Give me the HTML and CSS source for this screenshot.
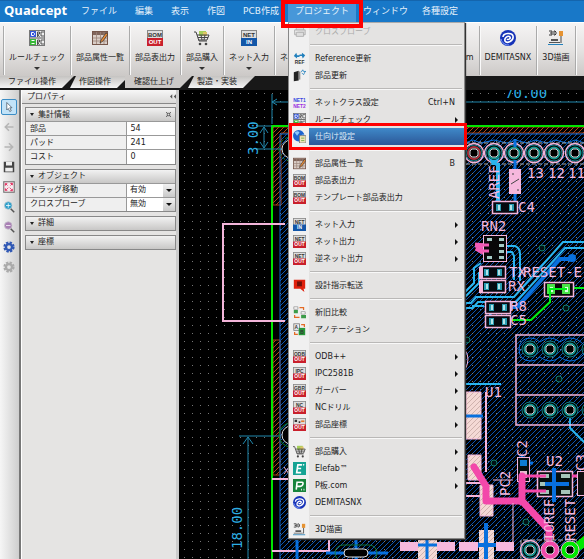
FILE: index.html
```html
<!DOCTYPE html>
<html lang="ja">
<head>
    <meta charset="UTF-8">
    <meta name="viewport" content="width=device-width, initial-scale=1.0">
    <title>Quadcept</title>
    <link rel="stylesheet" href="styles.css">
</head>
<body>
    <!-- 共通アイコン -->
    <svg class="defs" width="0" height="0" aria-hidden="true">
        <symbol id="out" viewBox="0 0 16 16">
            <rect x=".5" y=".5" width="15" height="15" fill="#ddd" stroke="#888"/>
            <rect y="8" width="16" height="8" fill="#c9202c"/>
        </symbol>
        <symbol id="in" viewBox="0 0 16 16">
            <rect x=".5" y=".5" width="15" height="15" fill="#ddd" stroke="#888"/>
            <rect y="8" width="16" height="8" fill="#1256a8"/>
        </symbol>
        <symbol id="list" viewBox="0 0 16 16">
            <rect x=".5" y="1.500" width="15" height="13" fill="#d9cdc6" stroke="#75564a"/>
            <path d="M1 2h14v3H1z" fill="#80655b"/>
            <path d="M4.500 2v12M8.500 2v12M12 2v12M1 8h14M1 11h14" stroke="#9b8378" stroke-width=".8"/>
            <path d="M8 13l1-3 5-7 2 1-5 7z" fill="#e98b36" stroke="#333" stroke-width=".7"/>
        </symbol>
        <symbol id="cart" viewBox="0 0 16 16">
            <path d="M5 1h7v5H5z" fill="#a5cf58"/><path d="M9 2h4v4H9z" fill="#dfc568"/>
            <path d="M0 2h2l3 9h8M3 5h12l-2 5H5M4 7.500h10M7 5l1 5M11 5l-1 5" fill="none" stroke="#444"/>
            <circle cx="6" cy="14" r="1.300" fill="#444"/><circle cx="12" cy="14" r="1.300" fill="#444"/>
        </symbol>
        <symbol id="rule" viewBox="0 0 16 16">
            <rect x=".5" y=".5" width="15" height="15" fill="#eee" stroke="#777"/>
            <path d="M1 1h6v6H1z" fill="#3558d8"/><path d="M1 9h6v6H1z" fill="#38b838"/>
            <path d="M2.500 2.500h2l1 1v1l-1 1h-2zM2.500 10.500h3M2.500 13.500h3" fill="none" stroke="#fff"/>
            <path d="M8.500 7V2h2v2h-2l2 3M15 2h-3v4h3M8.500 15v-5h2v2h-2l2 3M15 10h-3v4h3M1 8h14" fill="none" stroke="#444" stroke-width=".9"/>
        </symbol>
        <symbol id="demitas" viewBox="0 0 16 16">
            <circle cx="8" cy="8" r="8" fill="#1733b8"/>
            <path d="M3 7c0-4 9-5 10-1 1 5-6 8-8 5-1-3 3-6 5-4 1 2-2 3-3 2" fill="none" stroke="#fff" stroke-width="1.600"/>
            <path d="M1 9c1 4 4 6 8 6" fill="none" stroke="#82a1ff"/>
        </symbol>
        <symbol id="view3d" viewBox="0 0 16 16">
            <path d="M1 1h3v4H1M2 3h2M6 1v4h1l1-1V2L7 1z" fill="none" stroke="#333"/>
            <path d="M11 1h4v5h-4z" fill="#e69332"/><path d="M13 6v7" stroke="#444"/>
            <path d="M3 9h7v2H3zM1 12h11v1H1z" fill="#555"/><path d="M0 14h15v1H0z" fill="#2480bb"/>
        </symbol>
        <symbol id="pban" viewBox="0 0 16 16">
            <rect width="16" height="16" fill="#17843c"/>
            <path d="M4 13l1-9h6q2 0 1 3-1 2-3 2H5M10 13h1M13 13h1" fill="none" stroke="#fff" stroke-width="2"/>
        </symbol>
        <symbol id="elefab" viewBox="0 0 16 16">
            <rect width="16" height="16" fill="#16a394"/>
            <path d="M11 3.500H6L4.500 13H10M5 8h5" fill="none" stroke="#fff" stroke-width="2"/><circle cx="13" cy="3.500" r="1" fill="#fff"/>
        </symbol>
        <symbol id="gear" viewBox="0 0 16 16">
            <circle cx="8" cy="8" r="6" fill="none" stroke="currentColor" stroke-width="3" stroke-dasharray="3.140 1.572"/>
            <circle cx="8" cy="8" r="4" fill="none" stroke="currentColor" stroke-width="3"/>
        </symbol>
    </svg>

    <header class="menubar">
        <h1 class="logo">Quadcept</h1>
        <nav class="nav nav-main">
            <button>ファイル</button>
            <button>編集</button>
            <button>表示</button>
            <button>作図</button>
            <button>PCB作成</button>
        </nav>
        <nav class="nav nav-tools">
            <div class="nav-item open">
                <button aria-expanded="true">プロジェクト</button>
                <div class="dropdown">
                    <button class="item" disabled><svg viewBox="0 0 16 16"><path d="M4 6V2h9v4M2 6h13v6h-2M4 12H2V6M4 9h9v5H4z" fill="#ddd" stroke="#aaa"/></svg><span>クロスプローブ</span></button>
                    <hr>
                    <button class="item"><svg viewBox="0 0 16 16"><path d="M1 5l3-4 1 3h3v2H5v2zM15 4l-3 4-1-3H8V3h3V1z" fill="#2180bd"/><text x="8" y="15" class="tag">REF</text></svg><span>Reference更新</span></button>
                    <button class="item"><svg viewBox="0 0 16 16"><path d="M1 4l6-2v12l-6 1z" fill="#222"/><path d="M7 3h2v10H7z" fill="#888"/><path d="M10 4l2-3 1 2h3M15 3l-2 4-2-2" fill="none" stroke="#2180bd"/></svg><span>部品更新</span></button>
                    <hr>
                    <button class="item"><svg viewBox="0 0 16 16"><text x="8" y="7" class="tag tag-blue">NET1</text><text x="8" y="15" class="tag tag-purple">NET2</text></svg><span>ネットクラス設定</span><kbd>Ctrl+N</kbd></button>
                    <button class="item more"><svg><use href="#rule"/></svg><span>ルールチェック</span></button>
                    <button class="item selected"><svg viewBox="0 0 16 16"><circle cx="7" cy="7" r="7" fill="#1e64cf"/><path d="M2 3q4-3 6 0L5 7zM9 7l4-2v5z" fill="#8bc9ff"/><rect x="8" y="7" width="8" height="9" fill="#eee3b8" stroke="#777"/><path d="M10 10h4M10 13h4" stroke="#69a53d"/></svg><span>仕向け設定</span></button>
                    <hr>
                    <button class="item"><svg><use href="#list"/></svg><span>部品属性一覧</span><kbd>B</kbd></button>
                    <button class="item"><svg viewBox="0 0 16 16"><use href="#out"/><text x="8" y="7" class="tag">BOM</text><text x="8" y="14" class="tag tag-light">OUT</text></svg><span>部品表出力</span></button>
                    <button class="item"><svg viewBox="0 0 16 16"><use href="#out"/><text x="8" y="7" class="tag">BOM</text><text x="8" y="14" class="tag tag-light">OUT</text></svg><span>テンプレート部品表出力</span></button>
                    <hr>
                    <button class="item more"><svg viewBox="0 0 16 16"><use href="#in"/><text x="8" y="7" class="tag">NET</text><text x="8" y="14" class="tag tag-light">IN</text></svg><span>ネット入力</span></button>
                    <button class="item more"><svg viewBox="0 0 16 16"><use href="#out"/><text x="8" y="7" class="tag">NET</text><text x="8" y="14" class="tag tag-light">OUT</text></svg><span>ネット出力</span></button>
                    <button class="item more"><svg viewBox="0 0 16 16"><use href="#out"/><text x="8" y="7" class="tag">NET</text><text x="8" y="14" class="tag tag-light">OUT</text></svg><span>逆ネット出力</span></button>
                    <hr>
                    <button class="item"><svg viewBox="0 0 16 16"><path d="M1 1h14v11h-2l1 4-5-4H1z" fill="#e0210d"/><path d="M5 3h6v6H5z" fill="#701009"/></svg><span>設計指示転送</span></button>
                    <hr>
                    <button class="item"><svg viewBox="0 0 16 16"><path d="M1 1h5v3H1zM10 7h5v3h-5z" fill="#fff" stroke="#999"/><path d="M1 5h5v4H1zM10 11h6v4h-6z" fill="#3d9c4a"/><path d="M8 2h5v3M2 11v3h6" fill="none" stroke="#e46b25" stroke-width="1.500"/></svg><span>新旧比較</span></button>
                    <button class="item"><svg viewBox="0 0 16 16"><rect x="1" y="1" width="7" height="8" fill="#eee" stroke="#777"/><rect x="7" y="6" width="8" height="9" fill="#27983a"/><text x="4" y="7" class="tag">A</text><text x="11" y="13" class="tag">B</text><path d="M10 2h4v3M2 11v3h4" fill="none" stroke="#e46b25" stroke-width="1.500"/></svg><span>アノテーション</span></button>
                    <hr>
                    <button class="item more"><svg viewBox="0 0 16 16"><use href="#out"/><text x="8" y="7" class="tag">ODB</text><text x="8" y="14" class="tag tag-light">OUT</text></svg><span>ODB++</span></button>
                    <button class="item more"><svg viewBox="0 0 16 16"><use href="#out"/><text x="8" y="7" class="tag">IPC</text><text x="8" y="14" class="tag tag-light">OUT</text></svg><span>IPC2581B</span></button>
                    <button class="item more"><svg viewBox="0 0 16 16"><use href="#out"/><text x="8" y="7" class="tag">GBR</text><text x="8" y="14" class="tag tag-light">OUT</text></svg><span>ガーバー</span></button>
                    <button class="item more"><svg viewBox="0 0 16 16"><use href="#out"/><text x="8" y="7" class="tag">NC</text><text x="8" y="14" class="tag tag-light">OUT</text></svg><span>NCドリル</span></button>
                    <button class="item more"><svg viewBox="0 0 16 16"><use href="#out"/><path d="M2 2h3v3H2zM7 4h2v2H7z" fill="#333"/><path d="M10 3h4v2h-4z" fill="#e47a2d"/><text x="8" y="14" class="tag tag-light">OUT</text></svg><span>部品座標</span></button>
                    <hr>
                    <button class="item more"><svg><use href="#cart"/></svg><span>部品購入</span></button>
                    <button class="item more"><svg><use href="#elefab"/></svg><span>Elefab™</span></button>
                    <button class="item more"><svg><use href="#pban"/></svg><span>P板.com</span></button>
                    <button class="item"><svg><use href="#demitas"/></svg><span>DEMITASNX</span></button>
                    <hr>
                    <button class="item"><svg><use href="#view3d"/></svg><span>3D描画</span></button>
                </div>
            </div>
            <button>ウィンドウ</button>
            <button>各種設定</button>
        </nav>
    </header>

    <div class="ribbon">
        <button class="tool drop"><svg><use href="#rule"/></svg><span>ルールチェック</span></button>
        <button class="tool"><svg><use href="#list"/></svg><span>部品属性一覧</span></button>
        <button class="tool"><svg viewBox="0 0 16 16"><use href="#out"/><text x="8" y="7" class="tag">BOM</text><text x="8" y="14" class="tag tag-light">OUT</text></svg><span>部品表出力</span></button>
        <button class="tool drop"><svg><use href="#cart"/></svg><span>部品購入</span></button>
        <button class="tool drop"><svg viewBox="0 0 16 16"><use href="#in"/><text x="8" y="7" class="tag">NET</text><text x="8" y="14" class="tag tag-light">IN</text></svg><span>ネット入力</span></button>
        <button class="tool drop"><svg><use href="#out"/></svg><span>ネット出力</span></button>
        <button class="tool"><svg><use href="#out"/></svg><span>アノテーション</span></button>
        <button class="tool"><svg><use href="#elefab"/></svg><span>Elefab™</span></button>
        <button class="tool"><svg><use href="#pban"/></svg><span>P板.com</span></button>
        <button class="tool"><svg><use href="#demitas"/></svg><span>DEMITASNX</span></button>
        <button class="tool"><svg><use href="#view3d"/></svg><span>3D描画</span></button>
        <button class="tool"><svg></svg><span>も</span></button>
    </div>
    <div class="tabs">
        <button class="tab">ファイル操作</button>
        <button class="tab">作図操作</button>
        <button class="tab active">確認仕上げ</button>
        <button class="tab">製造・実装</button>
    </div>

    <main class="workspace">
        <div class="sidebar">
            <button class="active" aria-label="選択"><svg viewBox="0 0 16 16"><path d="M5 2v10l2-2 2 4 2-1-2-4h3z" fill="#fff" stroke="#456"/></svg></button>
            <button aria-label="戻る"><svg viewBox="0 0 16 16"><path d="M14 8H3M8 3L3 8l5 5" fill="none" stroke="#b5b5b5" stroke-width="2"/></svg></button>
            <button aria-label="進む"><svg viewBox="0 0 16 16"><path d="M2 8h11M8 3l5 5-5 5" fill="none" stroke="#b5b5b5" stroke-width="2"/></svg></button>
            <button aria-label="保存"><svg viewBox="0 0 16 16"><path d="M1 1h14v14H1z" fill="#444"/><path d="M4 1h8v5H4zM3 9h10v5H3z" fill="#eee"/></svg></button>
            <button aria-label="全体表示"><svg viewBox="0 0 16 16"><rect x="1" y="1" width="14" height="14" fill="#f7e9ed" stroke="#777" stroke-width="1.500"/><path d="M3 6V3h3zM10 3h3v3zM3 10v3h3zM10 13h3v-3zM4 4l8 8M12 4l-8 8" fill="#e12658" stroke="#e12658" stroke-dasharray="3 4"/></svg></button>
            <button aria-label="拡大"><svg viewBox="0 0 16 16"><path d="M10 10l5 5" stroke="#555" stroke-width="2"/><circle cx="7" cy="6" r="5" fill="#2a9ecb" stroke="#b7c5cd"/><path d="M4 6h6M7 3v6" stroke="#fff"/></svg></button>
            <button aria-label="縮小"><svg viewBox="0 0 16 16"><path d="M10 10l5 5" stroke="#555" stroke-width="2"/><circle cx="7" cy="6" r="5" fill="#a980b5" stroke="#c5bfc9"/><path d="M4 6h6" stroke="#fff"/></svg></button>
            <button class="blue" aria-label="設定"><svg><use href="#gear"/></svg></button>
            <button class="gray" aria-label="詳細設定"><svg><use href="#gear"/></svg></button>
        </div>

        <aside class="panel">
            <h2 class="panel-title">プロパティ<svg viewBox="0 0 8 6"><path d="M3 0v6L0 3zM8 0v6L5 3z" fill="#555"/></svg></h2>
            <section class="group">
                <h3>集計情報<svg viewBox="0 0 6 6"><path d="M0 0l2 2M6 0L4 2M0 6l2-2M6 6L4 4M1.500 1.500h3v3h-3z" fill="none" stroke="#555"/></svg></h3>
                <table>
                    <tr><th>部品</th><td>54</td></tr>
                    <tr><th>パッド</th><td>241</td></tr>
                    <tr><th>コスト</th><td>0</td></tr>
                </table>
            </section>
            <section class="group">
                <h3>オブジェクト</h3>
                <div class="field">
                    <label for="drag">ドラッグ移動</label>
                    <div class="select"><select id="drag"><option>有効</option><option>無効</option></select></div>
                </div>
                <div class="field">
                    <label for="probe">クロスプローブ</label>
                    <div class="select"><select id="probe"><option>無効</option><option>有効</option></select></div>
                </div>
            </section>
            <section class="group"><h3>詳細</h3></section>
            <section class="group"><h3>座標</h3></section>
        </aside>

        <!-- 基板エディタ -->
        <svg class="board" viewBox="178 90 406 469" preserveAspectRatio="xMinYMin slice">
            <defs>
                <pattern id="dots" x="183" y="93" width="8" height="8" patternUnits="userSpaceOnUse"><rect width="1" height="1" fill="#777"/></pattern>
                <pattern id="blueHatch" width="5" height="5" patternUnits="userSpaceOnUse"><path d="M-1 6L6-1M-1 1l2-2M4 6l2-2" stroke="#0b55b4"/></pattern>
                <pattern id="orangeHatch" width="5" height="5" patternUnits="userSpaceOnUse"><path d="M-1 6L6-1M-1 1l2-2M4 6l2-2" stroke="#b44a18"/></pattern>
                <pattern id="copper" width="5" height="5" patternUnits="userSpaceOnUse"><rect width="5" height="5" fill="#f4d9d5"/><path d="M-1 6L6-1" stroke="#bfa19c" stroke-width=".7"/></pattern>
                <g id="hole">
                    <circle r="8" fill="#000" stroke="#128087"/>
                    <circle r="5.500" fill="none" stroke="#11968e" stroke-width="2"/>
                    <path d="M-4-2l2-2h4l2 2v4l-2 2h-4l-2-2z" fill="#000" stroke="#d6d2d7"/>
                </g>
                <g id="ringhole"><use href="#hole"/><circle r="9.500" fill="none" stroke="#f4b5da" stroke-width="1.500"/></g>
                <g id="chip">
                    <rect x=".5" y=".5" width="25" height="12" fill="#050a10" stroke="#f4b5da" stroke-width="1.500"/>
                    <path d="M4 3h5v7H4zM17 3h5v7h-5z" fill="#299bb0"/><path d="M6 4h2v5H6zM18 4h2v5h-2z" fill="#b4e2e7"/>
                </g>
            </defs>
            <rect x="178" y="90" width="406" height="469" fill="#000"/>
            <rect x="279" y="133" width="305" height="426" fill="url(#blueHatch)"/>
            <path d="M272 127h312v6H280v72h-8zM272 340h7v135h-7z" fill="url(#orangeHatch)" stroke="#a44216"/>
            <rect x="178" y="90" width="406" height="469" fill="url(#dots)"/>
            <path d="M279 559V134h305" fill="none" stroke="#0b62cc"/>
            <path d="M271 559V126h313" fill="none" stroke="#00e600" stroke-width="2"/>

            <!-- 寸法線 -->
            <g fill="none" stroke="#2188ad">
                <path d="M271 94v30M271 102h313M276 99l-5 3 5 3M256 126h15M256 149h28M263 127v21M259 133l4-6 4 6M259 142l4 6 4-6M238 436h42M247 559V437M242 444l5-7 5 7"/>
            </g>
            <g class="dimension">
                <text x="504" y="98">70.00</text>
                <text transform="translate(257 155) rotate(-90)">3.00</text>
                <text transform="translate(241 549) rotate(-90)">18.00</text>
            </g>
            <path d="M284 224h-62v97h62M271 479h17M271 551h57V538" fill="none" stroke="#f4b5da" stroke-width="2"/>
            <circle cx="290" cy="149" r="9" fill="#000" stroke="#ddd"/><circle cx="290" cy="149" r="12" fill="none" stroke="#087c29" stroke-dasharray="3 2"/>
            <circle cx="290" cy="435" r="9" fill="#000" stroke="#ddd"/><circle cx="290" cy="435" r="12" fill="none" stroke="#087c29"/>
            <path d="M283 467l5 7M288 467l-5 7" stroke="#f4b5da"/>
            <path d="M296 559v-20M325 553h62M355 538v21" stroke="#0870de" stroke-width="3"/>
            <rect x="334" y="545" width="42" height="16" rx="8" fill="none" stroke="#12733d"/><rect x="343" y="549" width="24" height="8" rx="4" fill="#000" stroke="#ddd"/>
            <path d="M399 542h18v9h-18zM436 542h18v9h-18zM458 542h19v9h-19zM495 542h18v9h-18z" fill="#f6b8dd"/>
            <path d="M417 538h19v21h-19z" fill="url(#copper)"/><path d="M426 538v21M417 545h19" stroke="#0870de" stroke-width="3"/>

            <!-- ピンヘッダ -->
            <path d="M464 143l8-3 8 3 13-3 13 3 8-3 12 3 8-3 12 3 8-3 12 3 8-3 10 3" fill="none" stroke="#0870de"/>
            <path d="M465 143h119M465 164h119" stroke="#aaa" stroke-dasharray="4 2"/>
            <use href="#ringhole" x="473" y="153"/><use href="#ringhole" x="493" y="153"/><use href="#ringhole" x="513" y="153"/>
            <use href="#ringhole" x="533" y="153"/><use href="#ringhole" x="553" y="153"/><use href="#ringhole" x="574" y="153"/>
            <circle cx="473" cy="153" r="6" fill="none" stroke="#a92d38" stroke-width="2"/>
            <path d="M514 139v8M514 160v48" stroke="#0870de" stroke-width="3"/>
            <path d="M487 156q6 8 12 0l-4 9h-4z" fill="#2ab4ef"/><path d="M497 163v42" stroke="#2ab4ef" stroke-width="4"/>
            <rect x="508" y="169" width="12" height="25" fill="#f6b8dd"/><path d="M510 184l8-5M511 174h2M516 190h2" stroke="#444"/>
            <use href="#chip" x="491" y="201"/>

            <!-- 配線 -->
            <g fill="none" stroke="#2ab4ef" stroke-width="2">
                <path d="M464 292l9-9V268l7-5M464 297l14-14v-11M464 303h6l5-6h38l49-55h22M464 308h8l5-6h38l49-54h20M506 246h8q5 2 5 8v27M506 252h5l2 4v24"/>
                <path d="M464 384h36M471 306h12M489 308v12M569 410v18l17 17"/>
            </g>
            <path d="M508 307h8l43-48h12" fill="none" stroke="#0870de" stroke-width="4"/><circle cx="571" cy="258" r="4" fill="#0870de"/>
            <path d="M504 320h26l19-18v-13M566 288h18" fill="none" stroke="#00ee18" stroke-width="2"/>
            <path d="M474 245l9 1h6M475 248l9 5h5" stroke="#f15bb5" stroke-width="5"/>
            <rect x="482.500" y="235.500" width="23" height="26" fill="#080808" stroke="#f4b5da"/>
            <path d="M486 238h5v3h-5zM486 256h5v3h-5zM498 238h5v3h-5zM498 244h5v3h-5zM498 250h5v3h-5zM498 256h5v3h-5z" fill="#a6cbc7"/>
            <path d="M474 245h14M478 251h10" stroke="#f15bb5" stroke-width="3"/>
            <use href="#chip" x="479" y="266"/><use href="#chip" x="479" y="280"/><use href="#chip" x="484" y="301"/><use href="#chip" x="484" y="315"/>
            <path d="M478 267h4v12h-4zM478 281h4v12h-4z" fill="#f4b5da"/>
            <rect x="543.500" y="282.500" width="29" height="14" fill="#080808" stroke="#f4b5da" stroke-width="1.500"/>
            <path d="M546 284h8v10h-8zM561 284h8v10h-8z" fill="#49e448"/><path d="M549 287h3v5h-3zM564 287h3v5h-3z" fill="#d9ffe0"/>
            <path d="M549 297v-8h17" fill="none" stroke="#00ee18" stroke-width="2"/>

            <!-- コネクタ -->
            <path d="M584 335h-69v90h69M515 365h69M515 395h69" fill="none" stroke="#f4b5da" stroke-width="1.500"/>
            <path d="M518 350q0-12 12-12 5 0 9 4 5-4 10-4t10 4q5-4 10-4 8 0 15 8M518 349q0 12 12 12 5 0 9-4 5 4 10 4t10-4q5 4 10 4 8 0 15-8" fill="none" stroke="#0870de"/>
            <use href="#hole" x="529" y="349"/><use href="#hole" x="549" y="349"/><use href="#hole" x="569" y="349"/><use href="#hole" x="589" y="349"/>
            <use href="#hole" x="529" y="410"/><use href="#hole" x="549" y="410"/><use href="#hole" x="569" y="410"/><use href="#hole" x="589" y="410"/>
            <g fill="#001114" stroke="#138170"><circle cx="541" cy="248" r="3"/><circle cx="565" cy="308" r="3"/><circle cx="558" cy="379" r="3"/><circle cx="493" cy="463" r="3"/><circle cx="525" cy="522" r="3"/><circle cx="466" cy="340" r="3"/></g>

            <!-- 電源まわり -->
            <path d="M465 392h15v47h-15zM467 455h13v25h-13zM479 485h13v31h-13z" fill="url(#copper)" stroke="#f4b5da"/>
            <path d="M485 392v80M460 483h25M460 496h20" stroke="#f4b5da" stroke-width="2"/>
            <path d="M465 416h17M516 463h16M521 455v10" stroke="#0870de" stroke-width="3"/>
            <rect x="516.500" y="457.500" width="12" height="24" fill="#07100e" stroke="#f4b5da"/><path d="M519 460h7v6h-7z" fill="#0e7dd1"/><path d="M519 471h7v7h-7z" fill="#e7bed1"/>
            <rect x="536.500" y="471.500" width="35" height="25" fill="#07100e" stroke="#f4b5da" stroke-width="1.500"/>
            <path d="M539 474h9v4h-9zM539 482h9v4h-9zM539 490h9v4h-9zM560 474h9v4h-9zM560 490h9v4h-9z" fill="#a6c5b9"/>
            <path d="M553 468v34M544 484h24" stroke="#0870de" stroke-width="4"/>
            <path d="M473 467l12 19v15h36l27 29v29M521 476v26" fill="none" stroke="#f348aa" stroke-width="7" stroke-linejoin="round" stroke-linecap="round"/>
            <path d="M521 476h24M521 491h24M571 476h13" stroke="#f348aa" stroke-width="3"/>
            <rect x="576.500" y="471.500" width="10" height="24" fill="#111" stroke="#f4b5da"/>
            <path d="M492 480h20M512 503v39" stroke="#f4b5da"/>
            <path d="M478 530h15v29h-15z" fill="url(#copper)"/><path d="M485 523v36M477 545h18" stroke="#0870de" stroke-width="4"/>
            <path d="M520 559v-19h64" fill="none" stroke="#bbb" stroke-dasharray="5 2"/>
            <circle cx="569" cy="550" r="9" fill="#00e900"/><path d="M572 545l12-10v12l-8 5z" fill="#00e900"/><circle cx="549" cy="550" r="9" fill="#f348aa"/>
            <use href="#ringhole" x="529" y="550"/>
            <path d="M545 548l2-2h4l2 2v4l-2 2h-4l-2-2zM565 548l2-2h4l2 2v4l-2 2h-4l-2-2z" fill="#000" stroke="#ddd"/>
            <g fill="none" stroke="#f4b5da"><circle cx="549" cy="550" r="9"/><circle cx="569" cy="550" r="9"/><path d="M464 350q6 8 0 20"/></g>

            <g class="silk">
                <text x="526" y="178">13</text><text x="547" y="178">12</text><text x="567" y="178">11</text>
                <text x="517" y="212">C4</text><text x="480" y="231">RN2</text><text x="508" y="277">TX</text><text x="522" y="277">RESET-E</text>
                <text x="507" y="291">RX</text><text x="509" y="311">R8</text><text x="509" y="325">C5</text><text x="484" y="397">U1</text><text x="545" y="466">U2</text>
                <text transform="translate(498 199) rotate(-90)">AREF</text>
                <text transform="translate(526 457) rotate(-90)">C2</text>
                <text transform="translate(509 496) rotate(-90)">PC2</text>
                <text transform="translate(585 471) rotate(-90)">C3</text>
                <text transform="translate(553 541) rotate(-90)">IOREF</text>
                <text transform="translate(574 541) rotate(-90)">RESET</text>
            </g>
        </svg>
    </main>
</body>
</html>
```
FILE: styles.css
```css
* {
    box-sizing: border-box;
}

body {
    margin: 0;
    height: 100vh;
    display: flex;
    flex-direction: column;
    overflow: hidden;
    background: #181818;
    color: #222;
    font-family: "DejaVu Sans", "Noto Sans CJK JP", sans-serif;
    font-size: 8px;
    line-height: 12px;
}

button {
    margin: 0;
    padding: 0;
    border: none;
    background: none;
    color: inherit;
    font: inherit;
    white-space: nowrap;
}

h1, h2, h3 {
    margin: 0;
    font-size: 8px;
    font-weight: normal;
}

.defs {
    position: absolute;
}

/* アイコン内の文字 */
.tag {
    font: bold 6px "Liberation Sans", sans-serif;
    text-anchor: middle;
    fill: #333;
}

.tag-light { fill: #fff; }
.tag-blue { fill: #3546df; }
.tag-purple { fill: #9b2be0; }

/* メニューバー */
.menubar {
    flex: none;
    display: flex;
    height: 22px;
    background: #1878c8;
    border-top: 1px solid #1465ad;
    color: #e4f0fa;
    font-size: 9px;
}

.logo {
    width: 72px;
    padding-left: 4px;
    color: #fff;
    font: bold 13px/19px "Open Sans", sans-serif;
}

.nav {
    display: flex;
}

.nav-main button {
    padding: 0 9px;
}

.nav-tools > button,
.nav-item > button {
    height: 100%;
    padding: 0 7px;
}

.nav-main button,
.nav-tools > button,
.nav-item > button {
    padding-bottom: 2px;
}

.nav-item {
    position: relative;
}

.nav-item.open > button {
    background: #4797d9;
}

/* 強調枠 */
.nav-item.open::after {
    content: "";
    position: absolute;
    z-index: 12;
    inset: -1px -7px -6px;
    border: 4px solid #f00;
    pointer-events: none;
}

/* ドロップダウン */
.dropdown {
    position: absolute;
    z-index: 10;
    top: 100%;
    left: 0;
    width: 177px;
    background: linear-gradient(90deg, #f0f0f0 20px, #e4e3e2 20px);
    border: 1px solid #888;
    border-top-color: #aaa;
    box-shadow: 1px 1px 1px #333;
    color: #222;
    font-size: 8px;
}

.dropdown hr {
    height: 2px;
    margin: 4px 2px 4px 21px;
    border: none;
    border-top: 1px solid #b9b8b7;
    border-bottom: 1px solid #f8f8f8;
}

.item {
    position: relative;
    display: flex;
    align-items: center;
    width: 100%;
    height: 17px;
    padding: 0 9px 0 4px;
    text-align: left;
}

.item:disabled {
    color: #aaa;
}

.item svg {
    flex: none;
    width: 13px;
    height: 13px;
    margin-right: 9px;
}

.item kbd {
    margin-left: auto;
    font: inherit;
}

.item.more::after {
    content: "";
    margin-left: auto;
    margin-right: -3px;
    border: 3px solid transparent;
    border-left-color: #111;
    border-right: none;
}

.item.selected {
    background: linear-gradient(#3f89c9, #2c5797) no-repeat 20px 0;
    color: #dceaf7;
}

.item.selected::after {
    content: "";
    position: absolute;
    z-index: 1;
    inset: -5px -3px -5px 0;
    border: 3px solid #f00;
}

/* リボン */
.ribbon {
    flex: none;
    display: flex;
    height: 54px;
    padding: 3px 0 1px 3px;
    overflow: hidden;
    background: linear-gradient(#f5f4f4, #e5e3e2 50%, #ccc9c7);
    border-top: 1px solid #fff;
}

.tool {
    flex: none;
    position: relative;
    display: flex;
    flex-direction: column;
    align-items: center;
    gap: 6px;
    padding: 4px 5px;
    border-left: 1px solid #aaa;
    box-shadow: inset 1px 0 #fafafa;
}

.tool svg {
    width: 16px;
    height: 16px;
}

.drop::after {
    content: "";
    position: absolute;
    top: 41px;
    border: 3px solid transparent;
    border-top-color: #333;
    border-bottom: none;
}

.tabs {
    flex: none;
    display: flex;
    height: 14px;
    padding-bottom: 2px;
    background: #181818;
}

.tab {
    margin-right: -4px;
    padding: 0 18px 0 8px;
    background: linear-gradient(#c5c3c1, #f4f4f4);
    clip-path: polygon(0 0, 100% 0, calc(100% - 12px) 100%, 0 100%);
}

.tab + .tab {
    padding-left: 9px;
    clip-path: polygon(6px 0, 100% 0, calc(100% - 12px) 100%, 0 100%);
}

.tab + .tab.active {
    background: #ccc9c7;
    clip-path: polygon(0 0, 100% 0, calc(100% - 12px) 100%, 0 100%);
}

/* 作業エリア */
.workspace {
    flex: 1;
    min-height: 0;
    display: flex;
}

.sidebar {
    flex: none;
    width: 21px;
    display: flex;
    flex-direction: column;
    align-items: center;
    gap: 4px;
    padding: 9px 2px 0 1px;
    background: linear-gradient(90deg, #f6f6f6, #cecece);
    border-right: 2px solid #777;
}

.sidebar button {
    width: 16px;
    height: 16px;
    padding: 2px;
}

.sidebar svg {
    display: block;
    width: 12px;
    height: 12px;
}

.sidebar .active {
    background: #c2e3f8;
    border: 1px solid #3c8dc5;
    border-radius: 2px;
    padding: 1px;
}

.sidebar .blue { color: #3159b5; }
.sidebar .gray { color: #aaa; }

.panel {
    flex: none;
    width: 158px;
    background: #e5e4e3;
    border-right: 3px solid #ccc;
    border-left: 1px solid #fff;
}

.panel-title {
    display: flex;
    justify-content: space-between;
    align-items: center;
    height: 14px;
    margin-bottom: 3px;
    padding: 0 0 0 5px;
    background: linear-gradient(#f7f7f7, #dad9d8);
    border-bottom: 1px solid #888;
}

.panel-title svg {
    width: 6px;
    height: 5px;
}

.group {
    margin: 0 0 4px 3px;
    border: 1px solid #888;
}

.group h3 {
    display: flex;
    align-items: center;
    height: 13px;
    padding: 0 4px;
    background: linear-gradient(#f2f2f2, #c8c7c6);
}

.group h3::before {
    content: "";
    margin-right: 4px;
    border: 2px solid transparent;
    border-top: 3px solid #222;
    border-bottom: none;
}

.group h3 svg {
    width: 5px;
    height: 5px;
    margin-left: auto;
}

.group table {
    width: 100%;
    border-collapse: collapse;
}

.group tr {
    height: 14px;
}

.group th,
.group td {
    padding: 0 4px;
    border-top: 1px solid #999;
    font-weight: normal;
    text-align: left;
}

.group th,
.field label {
    width: 100px;
    background: #efefef;
}

.group td {
    background: #fff;
    border-left: 1px solid #999;
}

.field {
    display: flex;
    height: 14px;
    border-top: 1px solid #999;
}

.field label {
    padding-left: 4px;
}

.select {
    flex: 1;
    position: relative;
    border-left: 1px solid #999;
    background: #fff;
}

.select select {
    display: block;
    width: 100%;
    height: 100%;
    padding: 0 14px 0 3px;
    appearance: none;
    border: none;
    border-radius: 0;
    background: linear-gradient(#f1f1f1, #c9c9c9) no-repeat right / 12px 100%;
    color: inherit;
    font: inherit;
}

.select::after {
    content: "";
    position: absolute;
    top: 5px;
    right: 3px;
    border: 3px solid transparent;
    border-top-color: #111;
    border-bottom: none;
    pointer-events: none;
}

.board {
    flex: 1;
    min-width: 0;
    height: 100%;
    display: block;
}

.dimension text {
    fill: #2caee4;
    font: 14px "DejaVu Sans Mono", monospace;
}

.silk text {
    fill: #f6b8dd;
    font: 14px "DejaVu Sans Mono", monospace;
}
```
